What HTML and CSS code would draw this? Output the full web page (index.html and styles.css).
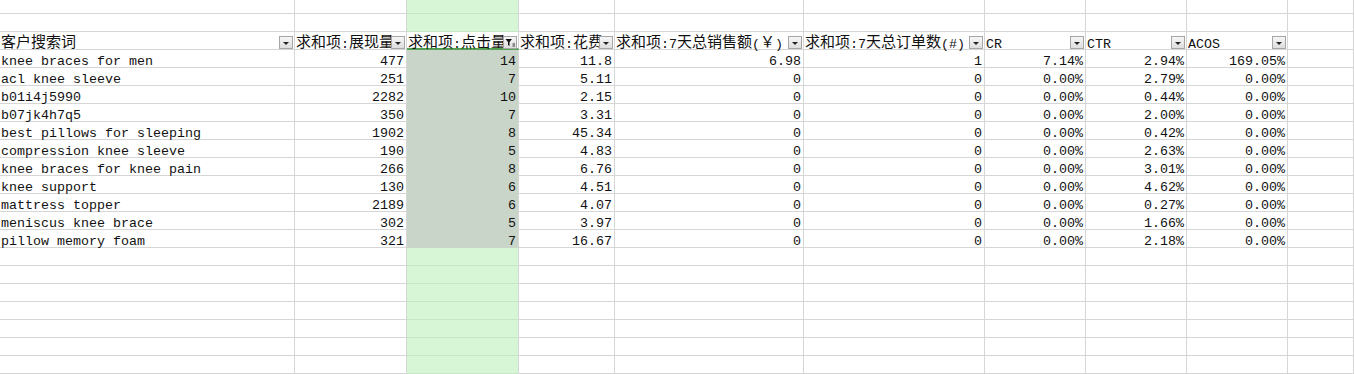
FILE: index.html
```html
<!DOCTYPE html>
<html lang="zh">
<head>
<meta charset="utf-8">
<title>数据透视表</title>
<link rel="stylesheet" href="styles.css">
</head>
<body>
<div class="sheet">
  <div class="row top"><div class="c"></div><div class="c"></div><div class="c g"></div><div class="c"></div><div class="c"></div><div class="c"></div><div class="c"></div><div class="c"></div><div class="c"></div><div class="c"></div></div>
  <div class="row"><div class="c"></div><div class="c"></div><div class="c g"></div><div class="c"></div><div class="c"></div><div class="c"></div><div class="c"></div><div class="c"></div><div class="c"></div><div class="c"></div></div>
  <div class="row head">
    <div class="c h"><span class="cj">客户搜索词</span><span class="dd"></span></div>
    <div class="c h"><span class="cj">求和项</span>:<span class="cj">展现量</span><span class="dd"></span></div>
    <div class="c h act"><span class="cj">求和项</span>:<span class="cj">点击量</span><span class="dd flt"><svg width="12" height="11" viewBox="0 0 12 11"><path d="M1.5 2h6.5l-2.5 3v4l-1.5-1v-3z" fill="#111"/><path d="M8.5 7h2.5M8.5 9h2.5" stroke="#333" stroke-width="1"/></svg></span></div>
    <div class="c h"><span class="cj">求和项</span>:<span class="cj">花费</span><span class="dd"></span></div>
    <div class="c h"><span class="cj">求和项</span>:7<span class="cj">天总销售额</span>(<span class="cj">￥</span>)<span class="dd"></span></div>
    <div class="c h"><span class="cj">求和项</span>:7<span class="cj">天总订单数</span>(#)<span class="dd"></span></div>
    <div class="c h">CR<span class="dd"></span></div>
    <div class="c h">CTR<span class="dd"></span></div>
    <div class="c h">ACOS<span class="dd"></span></div>
    <div class="c"></div>
  </div>
  <div class="row"><div class="c t">knee braces for men</div><div class="c n">477</div><div class="c n hl">14</div><div class="c n">11.8</div><div class="c n">6.98</div><div class="c n">1</div><div class="c n">7.14%</div><div class="c n">2.94%</div><div class="c n">169.05%</div><div class="c"></div></div>
  <div class="row"><div class="c t">acl knee sleeve</div><div class="c n">251</div><div class="c n hl">7</div><div class="c n">5.11</div><div class="c n">0</div><div class="c n">0</div><div class="c n">0.00%</div><div class="c n">2.79%</div><div class="c n">0.00%</div><div class="c"></div></div>
  <div class="row"><div class="c t">b01i4j5990</div><div class="c n">2282</div><div class="c n hl">10</div><div class="c n">2.15</div><div class="c n">0</div><div class="c n">0</div><div class="c n">0.00%</div><div class="c n">0.44%</div><div class="c n">0.00%</div><div class="c"></div></div>
  <div class="row"><div class="c t">b07jk4h7q5</div><div class="c n">350</div><div class="c n hl">7</div><div class="c n">3.31</div><div class="c n">0</div><div class="c n">0</div><div class="c n">0.00%</div><div class="c n">2.00%</div><div class="c n">0.00%</div><div class="c"></div></div>
  <div class="row"><div class="c t">best pillows for sleeping</div><div class="c n">1902</div><div class="c n hl">8</div><div class="c n">45.34</div><div class="c n">0</div><div class="c n">0</div><div class="c n">0.00%</div><div class="c n">0.42%</div><div class="c n">0.00%</div><div class="c"></div></div>
  <div class="row"><div class="c t">compression knee sleeve</div><div class="c n">190</div><div class="c n hl">5</div><div class="c n">4.83</div><div class="c n">0</div><div class="c n">0</div><div class="c n">0.00%</div><div class="c n">2.63%</div><div class="c n">0.00%</div><div class="c"></div></div>
  <div class="row"><div class="c t">knee braces for knee pain</div><div class="c n">266</div><div class="c n hl">8</div><div class="c n">6.76</div><div class="c n">0</div><div class="c n">0</div><div class="c n">0.00%</div><div class="c n">3.01%</div><div class="c n">0.00%</div><div class="c"></div></div>
  <div class="row"><div class="c t">knee support</div><div class="c n">130</div><div class="c n hl">6</div><div class="c n">4.51</div><div class="c n">0</div><div class="c n">0</div><div class="c n">0.00%</div><div class="c n">4.62%</div><div class="c n">0.00%</div><div class="c"></div></div>
  <div class="row"><div class="c t">mattress topper</div><div class="c n">2189</div><div class="c n hl">6</div><div class="c n">4.07</div><div class="c n">0</div><div class="c n">0</div><div class="c n">0.00%</div><div class="c n">0.27%</div><div class="c n">0.00%</div><div class="c"></div></div>
  <div class="row"><div class="c t">meniscus knee brace</div><div class="c n">302</div><div class="c n hl">5</div><div class="c n">3.97</div><div class="c n">0</div><div class="c n">0</div><div class="c n">0.00%</div><div class="c n">1.66%</div><div class="c n">0.00%</div><div class="c"></div></div>
  <div class="row"><div class="c t">pillow memory foam</div><div class="c n">321</div><div class="c n hl">7</div><div class="c n">16.67</div><div class="c n">0</div><div class="c n">0</div><div class="c n">0.00%</div><div class="c n">2.18%</div><div class="c n">0.00%</div><div class="c"></div></div>
  <div class="row"><div class="c"></div><div class="c"></div><div class="c g"></div><div class="c"></div><div class="c"></div><div class="c"></div><div class="c"></div><div class="c"></div><div class="c"></div><div class="c"></div></div>
  <div class="row"><div class="c"></div><div class="c"></div><div class="c g"></div><div class="c"></div><div class="c"></div><div class="c"></div><div class="c"></div><div class="c"></div><div class="c"></div><div class="c"></div></div>
  <div class="row"><div class="c"></div><div class="c"></div><div class="c g"></div><div class="c"></div><div class="c"></div><div class="c"></div><div class="c"></div><div class="c"></div><div class="c"></div><div class="c"></div></div>
  <div class="row"><div class="c"></div><div class="c"></div><div class="c g"></div><div class="c"></div><div class="c"></div><div class="c"></div><div class="c"></div><div class="c"></div><div class="c"></div><div class="c"></div></div>
  <div class="row"><div class="c"></div><div class="c"></div><div class="c g"></div><div class="c"></div><div class="c"></div><div class="c"></div><div class="c"></div><div class="c"></div><div class="c"></div><div class="c"></div></div>
  <div class="row"><div class="c"></div><div class="c"></div><div class="c g"></div><div class="c"></div><div class="c"></div><div class="c"></div><div class="c"></div><div class="c"></div><div class="c"></div><div class="c"></div></div>
  <div class="row"><div class="c"></div><div class="c"></div><div class="c g"></div><div class="c"></div><div class="c"></div><div class="c"></div><div class="c"></div><div class="c"></div><div class="c"></div><div class="c"></div></div>
</div>
</body>
</html>
```

FILE: styles.css
```css
html, body {
  margin: 0;
  padding: 0;
  background: #ffffff;
}
body {
  width: 1354px;
  height: 374px;
  overflow: hidden;
  font-family: "Liberation Mono", "Noto Sans CJK SC", monospace;
  font-size: 13.33px;
  color: #111111;
}
.sheet {
  display: flex;
  flex-direction: column;
}
.row {
  display: grid;
  grid-template-columns: 295px 112px 112px 96px 189px 181px 101px 101px 101px 1fr;
  grid-template-rows: minmax(0, 1fr);
  height: 18px;
  flex: none;
}
.row.top {
  height: 14px;
}
.c {
  box-sizing: border-box;
  min-height: 0;
  border-right: 1px solid #d6d6d6;
  border-bottom: 1px solid #d6d6d6;
  padding: 5px 2px 0 1px;
  line-height: 13px;
  white-space: nowrap;
  position: relative;
}
.c.n {
  text-align: right;
}
.c.g {
  background: #d6f6d6;
  border-bottom-color: #c9e6c9;
}
.c.hl {
  background: #c8d5c8;
  border-bottom-color: #c8d5c8;
}
.c.h {
  padding-top: 6px;
}
.c.act {
  border-bottom: 2px solid #539f53;
}
.cj {
  font-family: "Noto Sans CJK SC", sans-serif;
  font-size: 15px;
  line-height: 0;
  vertical-align: 1px;
}
.dd {
  position: absolute;
  right: 1px;
  bottom: 0;
  width: 14px;
  height: 13px;
  box-sizing: border-box;
  border: 1px solid #a6a6a6;
  background: linear-gradient(#f6f6f6, #dedede);
  display: flex;
  align-items: center;
  justify-content: center;
}
.dd::after {
  content: "";
  width: 0;
  height: 0;
  border-left: 3px solid transparent;
  border-right: 3px solid transparent;
  border-top: 3px solid #222222;
  margin-top: 1px;
}
.dd.flt::after {
  display: none;
}
.act .dd {
  bottom: -1px;
}
```
